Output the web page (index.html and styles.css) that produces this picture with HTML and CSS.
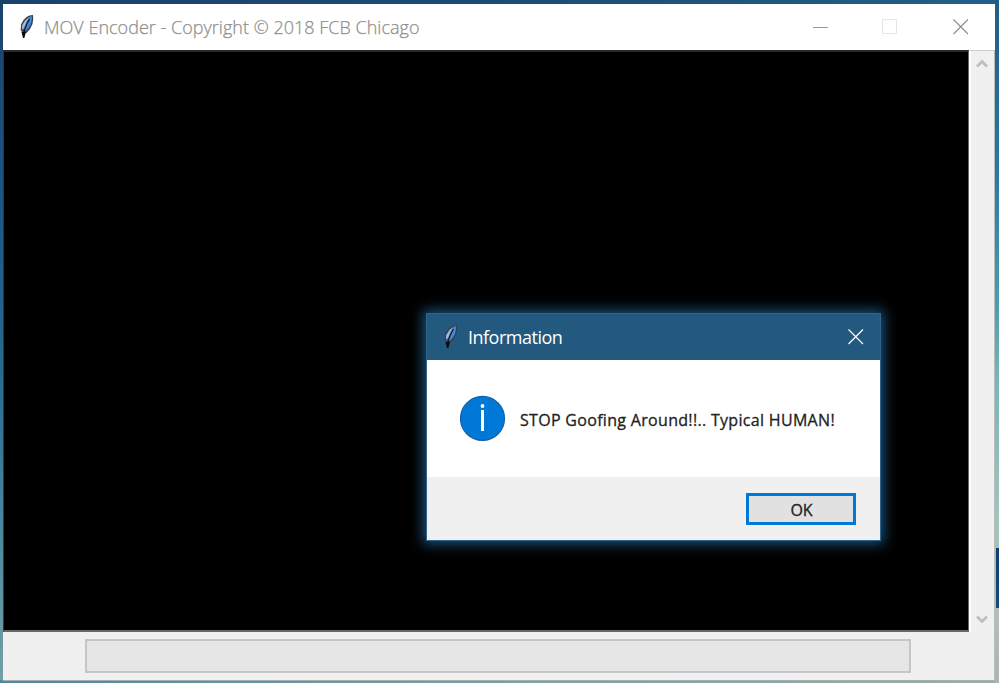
FILE: index.html
```html
<!DOCTYPE html>
<html lang="en">
<head>
<meta charset="utf-8">
<title>MOV Encoder</title>
<link rel="stylesheet" href="styles.css">
</head>
<body>
<svg width="0" height="0" class="defs" aria-hidden="true">
  <symbol id="feather" viewBox="0 0 16 26">
    <path d="M10.5 1.5 14 1 14.2 5 13.5 10 11 15 7.5 19 4 19.5 1.7 16 2 10.5 4.5 6 7.5 3Z" fill="#344252"/>
    <path d="M11 2.5 13 2.3 12.8 6 11.7 10.5 9.5 14 6 17.5 4.5 15 7 9Z" fill="#4688dc"/>
    <path d="M10.5 2.8 6.5 6 3.2 11 3 16 5 14 7.5 8Z" fill="#a3bdd8"/>
    <path d="M10.5 5 8 9.5 5.8 15 4.5 24" fill="none" stroke="#10151d" stroke-width="1.2"/>
    <path d="M2.5 18 7 18 5.2 24 4 24Z" fill="#080b10"/>
  </symbol>
</svg>
<div class="desktop">
  <div class="window">
    <header class="titlebar">
      <svg class="feather"><use href="#feather"/></svg>
      <span class="title">MOV Encoder - Copyright © 2018 FCB Chicago</span>
      <div class="controls">
        <svg width="16" height="16"><path d="M0 8.5H15" stroke="#999"/></svg>
        <svg width="16" height="16"><rect x=".5" y=".5" width="14" height="14" fill="none" stroke="#e6e6e6"/></svg>
        <svg class="close" width="16" height="16"><path d="M.5.5 15 15M15 .5.5 15" stroke="#8c8c8c" stroke-width="1.1"/></svg>
      </div>
    </header>
    <div class="content">
      <div class="console"></div>
      <div class="scrollbar">
        <svg width="12" height="11"><path d="M1 8.5 6 3.5 11 8.5" fill="none" stroke="#bfbfbf" stroke-width="3"/></svg>
        <svg width="12" height="11"><path d="M1 2.5 6 7.5 11 2.5" fill="none" stroke="#bfbfbf" stroke-width="3"/></svg>
      </div>
    </div>
    <footer class="status"><div class="progress"></div></footer>
  </div>
  <div class="dialog">
    <header class="dialog-title">
      <svg class="feather"><use href="#feather"/></svg>
      <span class="dialog-name">Information</span>
      <svg class="dialog-close" width="16" height="16"><path d="M.5.5 15 15M15 .5.5 15" stroke="#fff" stroke-width="1.2"/></svg>
    </header>
    <div class="message">
      <svg width="46" height="46"><circle cx="22.5" cy="23.4" r="22" fill="#0078d7" stroke="#1261a6" stroke-width="1.2"/><path d="M22.5 15V36" stroke="#fff" stroke-width="3"/><circle cx="22.5" cy="11" r="1.9" fill="#fff"/></svg>
      <span class="text">STOP Goofing Around!!.. Typical HUMAN!</span>
    </div>
    <div class="actions"><button class="ok"><span class="ok-label">OK</span></button></div>
  </div>
</div>
</body>
</html>
```
FILE: styles.css
```css
* { box-sizing: border-box; }
body { margin: 0; overflow: hidden; font-family: "Open Sans", sans-serif; }
svg { display: block; flex: none; }
.defs { position: absolute; }
.desktop {
  position: relative;
  width: 999px;
  height: 683px;
  padding: 4px 4px 2px 3px;
  background:
    linear-gradient(#123c6a, #164a7b) 996px 548px / 3px 60px no-repeat,
    linear-gradient(#235c84 0, #2a78a2 25%, #4f9db0 45%, #79b5b6 55%, #a0c3bd 75%, #b4bdb8 90%, #adb5ae 100%) right / 4px 100% no-repeat,
    linear-gradient(90deg, #4e899d, #75a2a9 50%, #9dadab) bottom / 100% 3px no-repeat,
    linear-gradient(90deg, #1b426c, #1b4c76 50%, #235f88) top / 100% 4px no-repeat,
    linear-gradient(#1b426c, #1d5683 30%, #286b90 55%, #508a9f 80%, #75a0a6);
}
.window { width: 992px; height: 677px; background: #f0f0f0; border-bottom: 1px solid #a7adab; border-right: 1px solid #b8bcbb; }
.titlebar { height: 46px; display: flex; align-items: center; background: #fff; padding-left: 16px; width: 992px; }
.feather { width: 16px; height: 26px; }
.title { margin-left: 9px; font-size: 18px; line-height: 24px; color: #8f8f8f; white-space: nowrap; font-weight: 300; letter-spacing: .02px; -webkit-text-stroke: .25px #8f8f8f; }
.controls { margin-left: auto; margin-right: 26px; display: flex; gap: 53px; }
.close { margin-left: 2px; }
.content { height: 582px; display: flex; }
.console { width: 966px; background: #000; border: 1px solid #686868; border-width: 2px 1px 2px 1px; border-top-color: #292929; border-left-color: #333; }
.scrollbar { flex: 1; border-left: 2px solid #fff; border-top: 1px solid #ccc; display: flex; flex-direction: column; align-items: center; justify-content: space-between; padding: 7px 1px 7px 0; }
.status { height: 48px; display: flex; padding: 7px 0 0 82px; }
.progress { width: 826px; height: 34px; border: 2px solid #c6c6c6; background: #e6e6e6; }
.dialog {
  position: absolute;
  left: 426px;
  top: 313px;
  width: 455px;
  height: 228px;
  border: 1px solid #2d658f;
  background: #fff;
  box-shadow: 0 0 12px 3px #1c527a;
}
.dialog-title { height: 46px; display: flex; align-items: center; padding: 0 16px; background: #23587f; color: #fff; }
.dialog-name { margin-left: 9px; font-size: 18px; line-height: 24px; font-weight: 400; letter-spacing: -.5px; white-space: nowrap; }
.dialog-close { margin-left: auto; }
.message { height: 117px; display: flex; align-items: center; padding: 0 0 1px 33px; }
.text { margin: 3px 0 0 14px; font-size: 16px; line-height: 22px; letter-spacing: .31px; color: #222; white-space: nowrap; -webkit-text-stroke: .3px #222; }
.actions { height: 63px; background: #f0f0f0; display: flex; justify-content: flex-end; padding: 16px 24px 0 0; }
.ok { width: 110px; height: 32px; border: 3px solid #0078d7; background: #e1e1e1; padding: 2px 0 0 1px; color: #222; font: 16px/20px "Open Sans", sans-serif; text-align: center; -webkit-text-stroke: .3px #222; }
.ok-label { display: inline-block; }
```
